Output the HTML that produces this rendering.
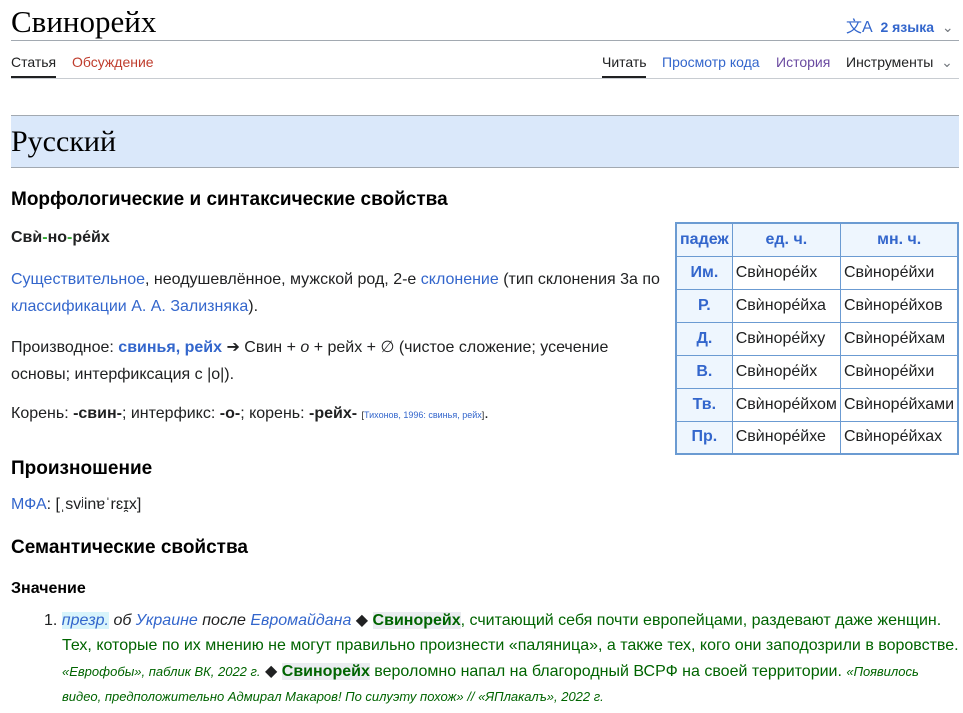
<!DOCTYPE html>
<html><head><meta charset="utf-8">
<style>
*{margin:0;padding:0;box-sizing:border-box}
body{width:963px;height:713px;overflow:hidden;background:#fff;font-family:"Liberation Sans",sans-serif;color:#202122;font-size:16px;position:relative}
.a{position:absolute;white-space:nowrap}
a,.l{color:#3366cc;text-decoration:none}
.serif{font-family:"Liberation Serif",serif}
.g{color:#006400}
table{border-collapse:collapse;position:absolute;left:675px;top:222px;border:2px solid #6b9bd2}
td,th{border:1px solid #6b9bd2;height:33px;font-size:16px;padding:0 3px}
th{background:#eef6fe;color:#3366cc;font-weight:bold;text-align:center}
td{text-align:left}
.h2{font-size:19px;font-weight:bold;color:#000}
</style></head><body>
<div class="a serif" style="left:11px;top:4px;font-size:31px;color:#000">Свинорейх</div>
<div class="a" style="left:846px;top:13px;font-size:14px;color:#3366cc;font-weight:bold"><span style="font-weight:normal;font-size:16px">文A</span>&nbsp; 2 языка &nbsp;<span style="color:#72777d;font-weight:normal">⌄</span></div>
<div class="a" style="left:11px;top:40px;width:948px;height:1px;background:#a2a9b1"></div>
<div class="a" style="left:11px;top:54px;font-size:14px">Статья</div>
<div class="a" style="left:11px;top:76px;width:45px;height:2px;background:#202122"></div>
<div class="a" style="left:72px;top:54px;font-size:14px;color:#bf3c2c">Обсуждение</div>
<div class="a" style="left:602px;top:54px;font-size:14px">Читать</div>
<div class="a" style="left:602px;top:76px;width:44px;height:2px;background:#202122"></div>
<div class="a" style="left:662px;top:54px;font-size:14px;color:#3366cc">Просмотр кода</div>
<div class="a" style="left:776px;top:54px;font-size:14px;color:#6b4ba1">История</div>
<div class="a" style="left:846px;top:54px;font-size:14px">Инструменты &nbsp;<span style="color:#72777d">⌄</span></div>
<div class="a" style="left:11px;top:78px;width:948px;height:1px;background:#c8ccd1"></div>

<div class="a" style="left:11px;top:115px;width:948px;height:53px;background:#dae8fa;border-top:1px solid #a2a9b1;border-bottom:1px solid #a2a9b1"></div>
<div class="a serif" style="left:11px;top:125px;font-size:30px;color:#000">Русский</div>

<div class="a h2" style="left:11px;top:189px">Морфологические и синтаксические свойства</div>
<div class="a" style="left:11px;top:229px;font-weight:bold">Свѝ<span style="color:#3a3">-</span>но<span style="color:#3a3">-</span>ре́йх</div>
<div class="a" style="left:11px;top:266px;line-height:27px"><a>Существительное</a>, неодушевлённое, мужской род, 2-е <a>склонение</a> (тип склонения 3a по<br><a>классификации А. А. Зализняка</a>).</div>
<div class="a" style="left:11px;top:334px;line-height:27px">Производное: <b class="l">свинья, рейх</b> ➔ Свин + <i>о</i> + рейх + ∅ (чистое сложение; усечение<br>основы; интерфиксация с |о|).</div>
<div class="a" style="left:11px;top:405px">Корень: <b>-свин-</b>; интерфикс: <b>-о-</b>; корень: <b>-рейх-</b> <span style="font-size:9px">[<a>Тихонов, 1996: свинья, рейх</a>]</span>.</div>

<table>
<tr><th style="width:56px">падеж</th><th style="width:108px">ед. ч.</th><th style="width:118px">мн. ч.</th></tr>
<tr><th>Им.</th><td>Свѝноре́йх</td><td>Свѝноре́йхи</td></tr>
<tr><th>Р.</th><td>Свѝноре́йха</td><td>Свѝноре́йхов</td></tr>
<tr><th>Д.</th><td>Свѝноре́йху</td><td>Свѝноре́йхам</td></tr>
<tr><th>В.</th><td>Свѝноре́йх</td><td>Свѝноре́йхи</td></tr>
<tr><th>Тв.</th><td>Свѝноре́йхом</td><td>Свѝноре́йхами</td></tr>
<tr><th>Пр.</th><td>Свѝноре́йхе</td><td>Свѝноре́йхах</td></tr>
</table>

<div class="a h2" style="left:11px;top:458px">Произношение</div>
<div class="a" style="left:11px;top:496px"><a>МФА</a>: [ˌsvʲinɐˈrɛɪ̯x]</div>
<div class="a h2" style="left:11px;top:537px">Семантические свойства</div>
<div class="a" style="left:11px;top:580px;font-weight:bold;color:#000">Значение</div>

<div class="a" style="left:44px;top:610px;line-height:22px">1. <i><span style="background:#d8f4fb" class="l">презр.</span> об <a>Украине</a> после <a>Евромайдана</a></i> ◆ <span class="g"><b style="background:#eaecf0">Свинорейх</b>, считающий себя почти европейцами, раздевают даже женщин.</span></div>
<div class="a g" style="left:62px;top:637px">Тех, которые по их мнению не могут правильно произнести «паляница», а также тех, кого они заподозрили в воровстве.</div>
<div class="a g" style="left:62px;top:661px"><i style="font-size:13px">«Еврофобы», паблик ВК, 2022 г.</i> <span style="color:#202122">◆</span> <b style="background:#eaecf0">Свинорейх</b> вероломно напал на благородный ВСРФ на своей территории. <i style="font-size:13px">«Появилось</i></div>
<div class="a g" style="left:62px;top:689px;font-size:13px"><i>видео, предположительно Адмирал Макаров! По силуэту похож» // «ЯПлакалъ», 2022 г.</i></div>
</body></html>
